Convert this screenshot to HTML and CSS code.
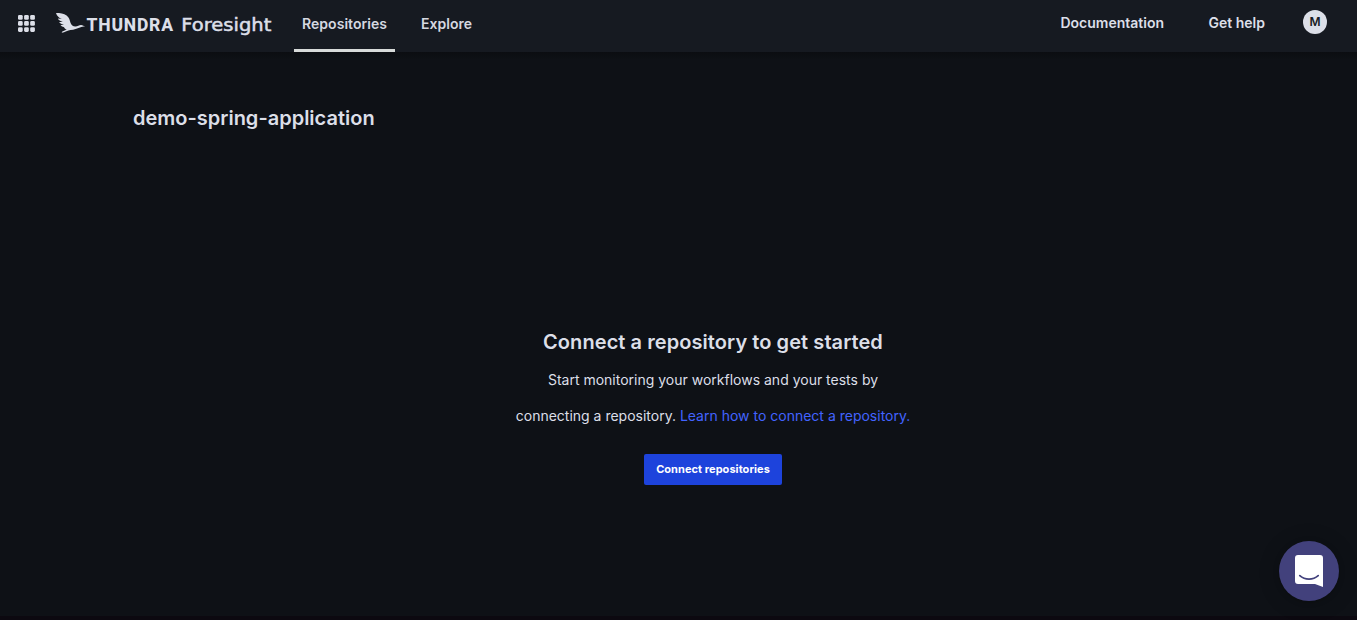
FILE: index.html
```html
<!DOCTYPE html>
<html lang="en">
<head>
<meta charset="utf-8">
<title>Thundra Foresight</title>
<link rel="stylesheet" href="styles.css">
</head>
<body>
<header class="topbar">
  <svg class="apps" width="17" height="17" viewBox="0 0 17 17">
    <rect x="0" y="0" width="4.7" height="4.7" rx="1.3"/><rect x="6.1" y="0" width="4.7" height="4.7" rx="1.3"/><rect x="12.2" y="0" width="4.7" height="4.7" rx="1.3"/>
    <rect x="0" y="6.1" width="4.7" height="4.7" rx="1.3"/><rect x="6.1" y="6.1" width="4.7" height="4.7" rx="1.3"/><rect x="12.2" y="6.1" width="4.7" height="4.7" rx="1.3"/>
    <rect x="0" y="12.2" width="4.7" height="4.7" rx="1.3"/><rect x="6.1" y="12.2" width="4.7" height="4.7" rx="1.3"/><rect x="12.2" y="12.2" width="4.7" height="4.7" rx="1.3"/>
  </svg>
  <svg class="logo" width="218" height="40" viewBox="0 0 218 40">
    <path d="M0 13C4 13 8 13.6 10.6 15.6C13.4 17.8 13.8 20.5 14.5 22.8C15.2 25 17 26.6 19.4 26.6C21.8 26.6 23 25.2 25 25.1C26.5 25 26.8 26 29.3 26.3C27 26.7 25.8 26.7 24 27.4C21 28.6 18.4 29.6 14.4 30C12 30.3 9 32.4 5.6 32.7L6.3 31.6L10.8 29.6C9.2 29 8.4 28.2 8.1 27.2C6.6 27 5.3 26.3 4.5 25.1L8 24.7C5.8 24.4 4 23.7 3.1 22.1L6.8 22C4.3 21.4 2.6 20.3 1.9 18.6L5.8 19.1C2.7 17.6 .8 15.8 0 13Z"/>
    <text class="logo-brand" x="30.5" y="31" textLength="86.5" lengthAdjust="spacing">THUNDRA</text>
    <text class="logo-product" x="125.3" y="31" textLength="90" lengthAdjust="spacingAndGlyphs">Foresight</text>
  </svg>
  <nav class="tabs">
    <a class="tab active">Repositories</a>
    <a class="tab">Explore</a>
  </nav>
  <nav class="links">
    <a>Documentation</a>
    <a>Get help</a>
    <span class="avatar">M</span>
  </nav>
</header>
<main class="content">
  <h1 class="project">demo-spring-application</h1>
  <section class="empty">
    <h2 class="empty-title">Connect a repository to get started</h2>
    <p class="empty-text">Start monitoring your workflows and your tests by<br>connecting a repository. <a class="learn">Learn how to connect a repository.</a></p>
    <button class="connect">Connect repositories</button>
  </section>
</main>
<div class="bottom-edge"></div>
<button class="chat" aria-label="Open chat">
  <svg width="28" height="32" viewBox="0 0 28 32">
    <path fill="#fff" d="M3 0H25A3 3 0 0 1 28 3V32L20 29H3A3 3 0 0 1 0 26V3A3 3 0 0 1 3 0Z"/>
    <path fill="none" stroke="#42417c" stroke-width="1.8" stroke-linecap="round" d="M4.8 20.6C10 25.2 18 25.2 23.2 20.6"/>
  </svg>
</button>
</body>
</html>
```

FILE: styles.css
```css
* { box-sizing: border-box; }
body {
  margin: 0;
  height: 620px;
  overflow: hidden;
  display: flex;
  flex-direction: column;
  background: #0e1116;
  color: #dcdfe8;
  font-family: Inter, "Liberation Sans", sans-serif;
}
.topbar {
  height: 52px;
  flex: none;
  display: flex;
  align-items: flex-start;
  background: #161a21;
}
.apps { margin: 15px 0 0 18px; fill: #dcdfe8; }
.logo { margin-left: 21px; fill: #dcdfe8; }
.logo-brand { font: 800 17.5px Roboto, sans-serif; }
.logo-product { font: 17px "DejaVu Sans", sans-serif; stroke: #dcdfe8; stroke-width: .5px; }
.tabs { display: flex; gap: 18px; margin-left: 20px; }
.tab {
  height: 52px;
  padding: 0 8px;
  border-bottom: 3px solid transparent;
  font-size: 14px;
  font-weight: 600;
  line-height: 48px;
  letter-spacing: .04px;
  color: #d5d8e0;
}
.tab.active { border-color: #d7dad9; }
.links {
  display: flex;
  margin: 0 30px 0 auto;
  font-size: 14px;
  font-weight: 600;
  line-height: 46px;
}
.links a + a { margin-left: 44.5px; }
.avatar {
  width: 24px;
  height: 24px;
  margin: 10px 0 0 38px;
  border-radius: 50%;
  background: #dcdfe8;
  color: #171b22;
  font-size: 12px;
  line-height: 24px;
  text-align: center;
}
.content {
  flex: 1;
  padding: 51px 64px 0 133px;
  background: linear-gradient(#0b0d11, #0e1116 8px);
}
.project { margin: 0; font-size: 20px; font-weight: 600; line-height: 30px; }
.empty {
  margin-top: 194px;
  display: flex;
  flex-direction: column;
  align-items: center;
}
.empty-title { margin: 0; font-size: 20px; font-weight: 600; line-height: 30px; letter-spacing: .07px; }
.empty-text {
  margin: 5px 0 0;
  font-size: 14px;
  line-height: 36px;
  text-align: center;
}
.learn { color: #4263ff; }
.connect {
  width: 138px;
  height: 31px;
  margin-top: 20px;
  padding: 0 0 2px;
  border: 0;
  border-radius: 2px;
  background: #1d43dc;
  color: #fff;
  font: 700 11px Inter, sans-serif;
  letter-spacing: .05px;
}
.bottom-edge { height: 4px; flex: none; background: #0c0910; }
.chat {
  position: absolute;
  right: 18px;
  bottom: 19px;
  width: 60px;
  height: 60px;
  padding: 0;
  display: flex;
  align-items: center;
  justify-content: center;
  border: 0;
  border-radius: 50%;
  background: #42417c;
  box-shadow: 0 1px 6px rgba(0,0,0,.2), 0 2px 24px rgba(0,0,0,.12);
}
```
